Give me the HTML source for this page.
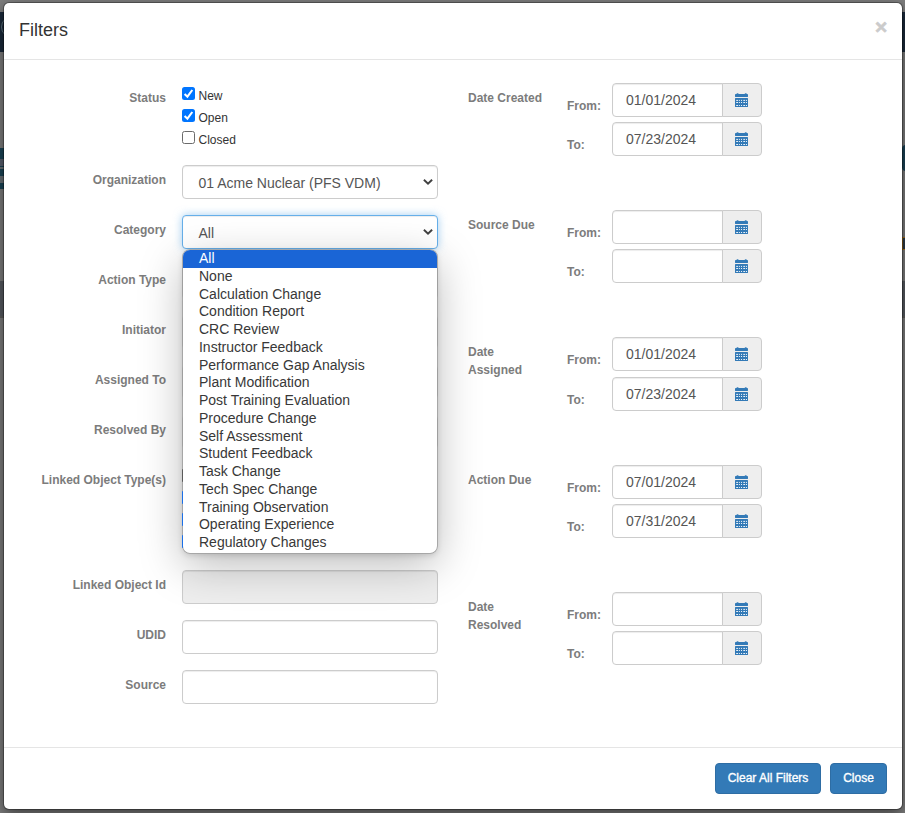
<!DOCTYPE html>
<html lang="en">
<head>
<meta charset="utf-8">
<title>Filters</title>
<style>
*{box-sizing:border-box;}
html,body{margin:0;padding:0;}
body{width:905px;height:813px;overflow:hidden;position:relative;background:#7f7f7f;
  font-family:"Liberation Sans",Arial,Helvetica,sans-serif;font-size:12px;line-height:1.42857143;color:#333;}
.abs{position:absolute;}
/* page behind backdrop */
.nav{left:0;top:12px;width:905px;height:40px;background:#1b2b3c;}
.teal{left:0;top:148px;width:20px;height:41px;background:#1b4658;}
.band{left:0;top:281px;width:905px;height:35px;background:#585c62;}
/* modal */
.modal{left:3px;top:2px;width:900px;height:808px;background:#fff;background-clip:padding-box;border:1px solid rgba(0,0,0,.3);border-radius:6px;
  box-shadow:0 5px 15px rgba(0,0,0,.5);}
.hline{left:4px;width:898px;height:1px;background:#e5e5e5;}
h4{margin:0;font-size:18px;font-weight:500;line-height:26px;color:#333;left:19px;top:17px;}
.close{left:875px;top:14px;font-size:21px;font-weight:bold;line-height:26px;color:#000;opacity:.2;-webkit-text-stroke:.7px #000;}
.lbl{font-weight:bold;color:#7c7c7c;text-align:right;width:166px;left:0;height:17px;line-height:17px;white-space:nowrap;}
.rl{font-weight:bold;color:#7c7c7c;left:468px;width:80px;line-height:17.5px;}
.ft{font-weight:bold;color:#7c7c7c;left:567px;line-height:17px;height:17px;}
.cb{width:13px;height:13px;border-radius:2.5px;left:182px;}
.cb.on{background:#0075ff;}
.cb.off{background:#fff;border:1px solid #6b6b6b;}
.cb svg{position:absolute;left:0;top:0;width:13px;height:13px;}
.cl{left:198.5px;line-height:17px;height:17px;color:#333;}
.fc{left:182px;width:256px;height:34px;border:1px solid #ccc;border-radius:4px;background:#fff;
  box-shadow:inset 0 1px 1px rgba(0,0,0,.075);font-size:14px;color:#555;line-height:34px;padding-left:15.5px;white-space:nowrap;}
.fc.focus{border-color:#66afe9;box-shadow:inset 0 1px 1px rgba(0,0,0,.075),0 0 8px rgba(102,175,233,.6);}
.fc.dis{background:#eee;}
.fc .arr{position:absolute;right:4px;top:12px;width:10px;height:8px;}
.di{left:612px;width:111px;height:34px;border:1px solid #ccc;border-radius:4px 0 0 4px;background:#fff;
  box-shadow:inset 0 1px 1px rgba(0,0,0,.075);font-size:14px;color:#555;line-height:32px;padding-left:13px;}
.da{left:722px;width:40px;height:34px;border:1px solid #ccc;border-radius:0 4px 4px 0;background:#eee;}
.da svg{position:absolute;left:12px;top:9px;width:13px;height:14px;}
.dd{left:183.2px;top:250px;width:253.8px;height:303.4px;background:#fff;border-radius:7px;
  box-shadow:0 0 0 .8px #9d9d9d,0 12px 44px rgba(0,0,0,.27),0 2px 6px rgba(0,0,0,.16);overflow:hidden;font-size:14px;color:#383838;}
.dd div{height:17.75px;line-height:17.75px;padding-left:15.8px;white-space:nowrap;}
.dd div.sel{background:#1a65d6;color:#fff;}
.btn{height:31px;border:1px solid #2e6da4;border-radius:4px;background:#337ab7;color:#fff;font-size:12px;line-height:29px;text-align:center;top:763px;
  -webkit-text-stroke:0.35px #fff;}
</style>
</head>
<body>
<div class="abs nav"></div>
<div class="abs teal"></div>
<div class="abs band"></div>
<div class="abs" style="left:0.5px;top:16px;width:22px;height:22px;border:1.5px solid #5f7581;border-radius:50%"></div>
<div class="abs" style="left:0;top:159px;width:4px;height:7px;background:#5b6270"></div>
<div class="abs" style="left:0;top:167px;width:4px;height:2px;background:#6d7478"></div>
<div class="abs" style="left:0;top:176px;width:4px;height:7px;background:#6b7378"></div>
<div class="abs" style="left:902px;top:145px;width:8px;height:26px;background:#1a4357;border-radius:4px 0 0 4px"></div>
<div class="abs" style="left:902px;top:237px;width:8px;height:13px;background:#2b3a47;border:1px solid #a8721f"></div>
<div class="abs" style="left:0;top:316px;width:905px;height:2px;background:#5e5e5e"></div>

<div class="abs modal"></div>
<div class="abs hline" style="top:59px"></div>
<div class="abs hline" style="top:747px"></div>
<h4 class="abs">Filters</h4>
<div class="abs close">×</div>

<!-- left column labels -->
<div class="abs lbl" style="top:90px">Status</div>
<div class="abs lbl" style="top:172px">Organization</div>
<div class="abs lbl" style="top:222px">Category</div>
<div class="abs lbl" style="top:272px">Action Type</div>
<div class="abs lbl" style="top:322px">Initiator</div>
<div class="abs lbl" style="top:372px">Assigned To</div>
<div class="abs lbl" style="top:422px">Resolved By</div>
<div class="abs lbl" style="top:472px">Linked Object Type(s)</div>
<div class="abs lbl" style="top:577px">Linked Object Id</div>
<div class="abs lbl" style="top:627px">UDID</div>
<div class="abs lbl" style="top:677px">Source</div>

<!-- status checkboxes -->
<div class="abs cb on" style="top:87px"><svg viewBox="0 0 13 13"><path d="M2.6 7.0 L5.4 9.7 L10.3 3.0" fill="none" stroke="#fff" stroke-width="2.1"/></svg></div>
<div class="abs cl" style="top:88px">New</div>
<div class="abs cb on" style="top:109px"><svg viewBox="0 0 13 13"><path d="M2.6 7.0 L5.4 9.7 L10.3 3.0" fill="none" stroke="#fff" stroke-width="2.1"/></svg></div>
<div class="abs cl" style="top:110px">Open</div>
<div class="abs cb off" style="top:131px"></div>
<div class="abs cl" style="top:132px">Closed</div>

<!-- controls hidden under list -->
<div class="abs fc" style="top:265px">All</div>
<div class="abs fc" style="top:315px">All</div>
<div class="abs fc" style="top:365px">All</div>
<div class="abs fc" style="top:415px">All</div>
<div class="abs cb off" style="top:469px;left:181.7px"></div>
<div class="abs cb on" style="top:491px;left:181.7px"></div>
<div class="abs cb on" style="top:513px;left:181.7px"></div>
<div class="abs cb on" style="top:535px;left:181.7px"></div>

<div class="abs fc" style="top:165px">01 Acme Nuclear (PFS VDM)<svg class="arr" viewBox="0 0 10 8"><path d="M0.9 1.7 L5 5.7 L9.1 1.7" fill="none" stroke="#404040" stroke-width="1.9"/></svg></div>
<div class="abs fc focus" style="top:215px">All<svg class="arr" viewBox="0 0 10 8"><path d="M0.9 1.7 L5 5.7 L9.1 1.7" fill="none" stroke="#404040" stroke-width="1.9"/></svg></div>

<div class="abs fc dis" style="top:570px"></div>
<div class="abs fc" style="top:620px"></div>
<div class="abs fc" style="top:670px"></div>

<!-- dropdown list -->
<div class="abs dd">
<div class="sel">All</div>
<div>None</div>
<div>Calculation Change</div>
<div>Condition Report</div>
<div>CRC Review</div>
<div>Instructor Feedback</div>
<div>Performance Gap Analysis</div>
<div>Plant Modification</div>
<div>Post Training Evaluation</div>
<div>Procedure Change</div>
<div>Self Assessment</div>
<div>Student Feedback</div>
<div>Task Change</div>
<div>Tech Spec Change</div>
<div>Training Observation</div>
<div>Operating Experience</div>
<div>Regulatory Changes</div>
</div>

<div class="abs" style="left:182.3px;top:469px;width:1px;height:13px;background:#5a5a5a;border-radius:2px 0 0 2px"></div>
<div class="abs" style="left:182.3px;top:491px;width:1px;height:13px;background:#1a6fe8;border-radius:2px 0 0 2px"></div>
<div class="abs" style="left:182.3px;top:513px;width:1px;height:13px;background:#1a6fe8;border-radius:2px 0 0 2px"></div>
<div class="abs" style="left:182.3px;top:535px;width:1px;height:13px;background:#1a6fe8;border-radius:2px 0 0 2px"></div>
<!-- right column -->
<div class="abs rl" style="top:90px">Date Created</div>
<div class="abs ft" style="top:98px">From:</div>
<div class="abs di" style="top:83px">01/01/2024</div>
<div class="abs da" style="top:83px"><svg viewBox="0 0 13 14"><g fill="#337ab7"><rect x="1.4" y="0.2" width="2.3" height="2.5" rx="1"/><rect x="9.6" y="0.2" width="2.3" height="2.5" rx="1"/><rect x="0" y="1.1" width="13" height="2.8" rx=".4"/><rect x="0" y="5" width="13" height="9" rx=".5"/></g><rect x="1.20" y="6.90" width="1.8" height="1" fill="#fff" fill-opacity=".9"/><rect x="3.90" y="6.90" width="1.0" height="1" fill="#fff" fill-opacity=".9"/><rect x="6.00" y="6.90" width="1.0" height="1" fill="#fff" fill-opacity=".9"/><rect x="8.30" y="6.90" width="1.8" height="1" fill="#fff" fill-opacity=".9"/><rect x="11.00" y="6.90" width="1.0" height="1" fill="#fff" fill-opacity=".9"/><rect x="1.20" y="9.00" width="1.8" height="1" fill="#fff" fill-opacity=".9"/><rect x="3.90" y="9.00" width="1.0" height="1" fill="#fff" fill-opacity=".9"/><rect x="6.00" y="9.00" width="1.0" height="1" fill="#fff" fill-opacity=".9"/><rect x="8.30" y="9.00" width="1.8" height="1" fill="#fff" fill-opacity=".9"/><rect x="11.00" y="9.00" width="1.0" height="1" fill="#fff" fill-opacity=".9"/><rect x="1.20" y="12.00" width="1.8" height="1" fill="#fff" fill-opacity=".9"/><rect x="3.90" y="12.00" width="1.0" height="1" fill="#fff" fill-opacity=".9"/><rect x="6.00" y="12.00" width="1.0" height="1" fill="#fff" fill-opacity=".9"/><rect x="8.30" y="12.00" width="1.8" height="1" fill="#fff" fill-opacity=".9"/><rect x="11.00" y="12.00" width="1.0" height="1" fill="#fff" fill-opacity=".9"/></svg></div>
<div class="abs ft" style="top:137px">To:</div>
<div class="abs di" style="top:122px">07/23/2024</div>
<div class="abs da" style="top:122px"><svg viewBox="0 0 13 14"><g fill="#337ab7"><rect x="1.4" y="0.2" width="2.3" height="2.5" rx="1"/><rect x="9.6" y="0.2" width="2.3" height="2.5" rx="1"/><rect x="0" y="1.1" width="13" height="2.8" rx=".4"/><rect x="0" y="5" width="13" height="9" rx=".5"/></g><rect x="1.20" y="6.90" width="1.8" height="1" fill="#fff" fill-opacity=".9"/><rect x="3.90" y="6.90" width="1.0" height="1" fill="#fff" fill-opacity=".9"/><rect x="6.00" y="6.90" width="1.0" height="1" fill="#fff" fill-opacity=".9"/><rect x="8.30" y="6.90" width="1.8" height="1" fill="#fff" fill-opacity=".9"/><rect x="11.00" y="6.90" width="1.0" height="1" fill="#fff" fill-opacity=".9"/><rect x="1.20" y="9.00" width="1.8" height="1" fill="#fff" fill-opacity=".9"/><rect x="3.90" y="9.00" width="1.0" height="1" fill="#fff" fill-opacity=".9"/><rect x="6.00" y="9.00" width="1.0" height="1" fill="#fff" fill-opacity=".9"/><rect x="8.30" y="9.00" width="1.8" height="1" fill="#fff" fill-opacity=".9"/><rect x="11.00" y="9.00" width="1.0" height="1" fill="#fff" fill-opacity=".9"/><rect x="1.20" y="12.00" width="1.8" height="1" fill="#fff" fill-opacity=".9"/><rect x="3.90" y="12.00" width="1.0" height="1" fill="#fff" fill-opacity=".9"/><rect x="6.00" y="12.00" width="1.0" height="1" fill="#fff" fill-opacity=".9"/><rect x="8.30" y="12.00" width="1.8" height="1" fill="#fff" fill-opacity=".9"/><rect x="11.00" y="12.00" width="1.0" height="1" fill="#fff" fill-opacity=".9"/></svg></div>
<div class="abs rl" style="top:217px">Source Due</div>
<div class="abs ft" style="top:225px">From:</div>
<div class="abs di" style="top:210px"></div>
<div class="abs da" style="top:210px"><svg viewBox="0 0 13 14"><g fill="#337ab7"><rect x="1.4" y="0.2" width="2.3" height="2.5" rx="1"/><rect x="9.6" y="0.2" width="2.3" height="2.5" rx="1"/><rect x="0" y="1.1" width="13" height="2.8" rx=".4"/><rect x="0" y="5" width="13" height="9" rx=".5"/></g><rect x="1.20" y="6.90" width="1.8" height="1" fill="#fff" fill-opacity=".9"/><rect x="3.90" y="6.90" width="1.0" height="1" fill="#fff" fill-opacity=".9"/><rect x="6.00" y="6.90" width="1.0" height="1" fill="#fff" fill-opacity=".9"/><rect x="8.30" y="6.90" width="1.8" height="1" fill="#fff" fill-opacity=".9"/><rect x="11.00" y="6.90" width="1.0" height="1" fill="#fff" fill-opacity=".9"/><rect x="1.20" y="9.00" width="1.8" height="1" fill="#fff" fill-opacity=".9"/><rect x="3.90" y="9.00" width="1.0" height="1" fill="#fff" fill-opacity=".9"/><rect x="6.00" y="9.00" width="1.0" height="1" fill="#fff" fill-opacity=".9"/><rect x="8.30" y="9.00" width="1.8" height="1" fill="#fff" fill-opacity=".9"/><rect x="11.00" y="9.00" width="1.0" height="1" fill="#fff" fill-opacity=".9"/><rect x="1.20" y="12.00" width="1.8" height="1" fill="#fff" fill-opacity=".9"/><rect x="3.90" y="12.00" width="1.0" height="1" fill="#fff" fill-opacity=".9"/><rect x="6.00" y="12.00" width="1.0" height="1" fill="#fff" fill-opacity=".9"/><rect x="8.30" y="12.00" width="1.8" height="1" fill="#fff" fill-opacity=".9"/><rect x="11.00" y="12.00" width="1.0" height="1" fill="#fff" fill-opacity=".9"/></svg></div>
<div class="abs ft" style="top:264px">To:</div>
<div class="abs di" style="top:249px"></div>
<div class="abs da" style="top:249px"><svg viewBox="0 0 13 14"><g fill="#337ab7"><rect x="1.4" y="0.2" width="2.3" height="2.5" rx="1"/><rect x="9.6" y="0.2" width="2.3" height="2.5" rx="1"/><rect x="0" y="1.1" width="13" height="2.8" rx=".4"/><rect x="0" y="5" width="13" height="9" rx=".5"/></g><rect x="1.20" y="6.90" width="1.8" height="1" fill="#fff" fill-opacity=".9"/><rect x="3.90" y="6.90" width="1.0" height="1" fill="#fff" fill-opacity=".9"/><rect x="6.00" y="6.90" width="1.0" height="1" fill="#fff" fill-opacity=".9"/><rect x="8.30" y="6.90" width="1.8" height="1" fill="#fff" fill-opacity=".9"/><rect x="11.00" y="6.90" width="1.0" height="1" fill="#fff" fill-opacity=".9"/><rect x="1.20" y="9.00" width="1.8" height="1" fill="#fff" fill-opacity=".9"/><rect x="3.90" y="9.00" width="1.0" height="1" fill="#fff" fill-opacity=".9"/><rect x="6.00" y="9.00" width="1.0" height="1" fill="#fff" fill-opacity=".9"/><rect x="8.30" y="9.00" width="1.8" height="1" fill="#fff" fill-opacity=".9"/><rect x="11.00" y="9.00" width="1.0" height="1" fill="#fff" fill-opacity=".9"/><rect x="1.20" y="12.00" width="1.8" height="1" fill="#fff" fill-opacity=".9"/><rect x="3.90" y="12.00" width="1.0" height="1" fill="#fff" fill-opacity=".9"/><rect x="6.00" y="12.00" width="1.0" height="1" fill="#fff" fill-opacity=".9"/><rect x="8.30" y="12.00" width="1.8" height="1" fill="#fff" fill-opacity=".9"/><rect x="11.00" y="12.00" width="1.0" height="1" fill="#fff" fill-opacity=".9"/></svg></div>
<div class="abs rl" style="top:344px">Date<br>Assigned</div>
<div class="abs ft" style="top:352px">From:</div>
<div class="abs di" style="top:337px">01/01/2024</div>
<div class="abs da" style="top:337px"><svg viewBox="0 0 13 14"><g fill="#337ab7"><rect x="1.4" y="0.2" width="2.3" height="2.5" rx="1"/><rect x="9.6" y="0.2" width="2.3" height="2.5" rx="1"/><rect x="0" y="1.1" width="13" height="2.8" rx=".4"/><rect x="0" y="5" width="13" height="9" rx=".5"/></g><rect x="1.20" y="6.90" width="1.8" height="1" fill="#fff" fill-opacity=".9"/><rect x="3.90" y="6.90" width="1.0" height="1" fill="#fff" fill-opacity=".9"/><rect x="6.00" y="6.90" width="1.0" height="1" fill="#fff" fill-opacity=".9"/><rect x="8.30" y="6.90" width="1.8" height="1" fill="#fff" fill-opacity=".9"/><rect x="11.00" y="6.90" width="1.0" height="1" fill="#fff" fill-opacity=".9"/><rect x="1.20" y="9.00" width="1.8" height="1" fill="#fff" fill-opacity=".9"/><rect x="3.90" y="9.00" width="1.0" height="1" fill="#fff" fill-opacity=".9"/><rect x="6.00" y="9.00" width="1.0" height="1" fill="#fff" fill-opacity=".9"/><rect x="8.30" y="9.00" width="1.8" height="1" fill="#fff" fill-opacity=".9"/><rect x="11.00" y="9.00" width="1.0" height="1" fill="#fff" fill-opacity=".9"/><rect x="1.20" y="12.00" width="1.8" height="1" fill="#fff" fill-opacity=".9"/><rect x="3.90" y="12.00" width="1.0" height="1" fill="#fff" fill-opacity=".9"/><rect x="6.00" y="12.00" width="1.0" height="1" fill="#fff" fill-opacity=".9"/><rect x="8.30" y="12.00" width="1.8" height="1" fill="#fff" fill-opacity=".9"/><rect x="11.00" y="12.00" width="1.0" height="1" fill="#fff" fill-opacity=".9"/></svg></div>
<div class="abs ft" style="top:392px">To:</div>
<div class="abs di" style="top:377px">07/23/2024</div>
<div class="abs da" style="top:377px"><svg viewBox="0 0 13 14"><g fill="#337ab7"><rect x="1.4" y="0.2" width="2.3" height="2.5" rx="1"/><rect x="9.6" y="0.2" width="2.3" height="2.5" rx="1"/><rect x="0" y="1.1" width="13" height="2.8" rx=".4"/><rect x="0" y="5" width="13" height="9" rx=".5"/></g><rect x="1.20" y="6.90" width="1.8" height="1" fill="#fff" fill-opacity=".9"/><rect x="3.90" y="6.90" width="1.0" height="1" fill="#fff" fill-opacity=".9"/><rect x="6.00" y="6.90" width="1.0" height="1" fill="#fff" fill-opacity=".9"/><rect x="8.30" y="6.90" width="1.8" height="1" fill="#fff" fill-opacity=".9"/><rect x="11.00" y="6.90" width="1.0" height="1" fill="#fff" fill-opacity=".9"/><rect x="1.20" y="9.00" width="1.8" height="1" fill="#fff" fill-opacity=".9"/><rect x="3.90" y="9.00" width="1.0" height="1" fill="#fff" fill-opacity=".9"/><rect x="6.00" y="9.00" width="1.0" height="1" fill="#fff" fill-opacity=".9"/><rect x="8.30" y="9.00" width="1.8" height="1" fill="#fff" fill-opacity=".9"/><rect x="11.00" y="9.00" width="1.0" height="1" fill="#fff" fill-opacity=".9"/><rect x="1.20" y="12.00" width="1.8" height="1" fill="#fff" fill-opacity=".9"/><rect x="3.90" y="12.00" width="1.0" height="1" fill="#fff" fill-opacity=".9"/><rect x="6.00" y="12.00" width="1.0" height="1" fill="#fff" fill-opacity=".9"/><rect x="8.30" y="12.00" width="1.8" height="1" fill="#fff" fill-opacity=".9"/><rect x="11.00" y="12.00" width="1.0" height="1" fill="#fff" fill-opacity=".9"/></svg></div>
<div class="abs rl" style="top:472px">Action Due</div>
<div class="abs ft" style="top:480px">From:</div>
<div class="abs di" style="top:465px">07/01/2024</div>
<div class="abs da" style="top:465px"><svg viewBox="0 0 13 14"><g fill="#337ab7"><rect x="1.4" y="0.2" width="2.3" height="2.5" rx="1"/><rect x="9.6" y="0.2" width="2.3" height="2.5" rx="1"/><rect x="0" y="1.1" width="13" height="2.8" rx=".4"/><rect x="0" y="5" width="13" height="9" rx=".5"/></g><rect x="1.20" y="6.90" width="1.8" height="1" fill="#fff" fill-opacity=".9"/><rect x="3.90" y="6.90" width="1.0" height="1" fill="#fff" fill-opacity=".9"/><rect x="6.00" y="6.90" width="1.0" height="1" fill="#fff" fill-opacity=".9"/><rect x="8.30" y="6.90" width="1.8" height="1" fill="#fff" fill-opacity=".9"/><rect x="11.00" y="6.90" width="1.0" height="1" fill="#fff" fill-opacity=".9"/><rect x="1.20" y="9.00" width="1.8" height="1" fill="#fff" fill-opacity=".9"/><rect x="3.90" y="9.00" width="1.0" height="1" fill="#fff" fill-opacity=".9"/><rect x="6.00" y="9.00" width="1.0" height="1" fill="#fff" fill-opacity=".9"/><rect x="8.30" y="9.00" width="1.8" height="1" fill="#fff" fill-opacity=".9"/><rect x="11.00" y="9.00" width="1.0" height="1" fill="#fff" fill-opacity=".9"/><rect x="1.20" y="12.00" width="1.8" height="1" fill="#fff" fill-opacity=".9"/><rect x="3.90" y="12.00" width="1.0" height="1" fill="#fff" fill-opacity=".9"/><rect x="6.00" y="12.00" width="1.0" height="1" fill="#fff" fill-opacity=".9"/><rect x="8.30" y="12.00" width="1.8" height="1" fill="#fff" fill-opacity=".9"/><rect x="11.00" y="12.00" width="1.0" height="1" fill="#fff" fill-opacity=".9"/></svg></div>
<div class="abs ft" style="top:519px">To:</div>
<div class="abs di" style="top:504px">07/31/2024</div>
<div class="abs da" style="top:504px"><svg viewBox="0 0 13 14"><g fill="#337ab7"><rect x="1.4" y="0.2" width="2.3" height="2.5" rx="1"/><rect x="9.6" y="0.2" width="2.3" height="2.5" rx="1"/><rect x="0" y="1.1" width="13" height="2.8" rx=".4"/><rect x="0" y="5" width="13" height="9" rx=".5"/></g><rect x="1.20" y="6.90" width="1.8" height="1" fill="#fff" fill-opacity=".9"/><rect x="3.90" y="6.90" width="1.0" height="1" fill="#fff" fill-opacity=".9"/><rect x="6.00" y="6.90" width="1.0" height="1" fill="#fff" fill-opacity=".9"/><rect x="8.30" y="6.90" width="1.8" height="1" fill="#fff" fill-opacity=".9"/><rect x="11.00" y="6.90" width="1.0" height="1" fill="#fff" fill-opacity=".9"/><rect x="1.20" y="9.00" width="1.8" height="1" fill="#fff" fill-opacity=".9"/><rect x="3.90" y="9.00" width="1.0" height="1" fill="#fff" fill-opacity=".9"/><rect x="6.00" y="9.00" width="1.0" height="1" fill="#fff" fill-opacity=".9"/><rect x="8.30" y="9.00" width="1.8" height="1" fill="#fff" fill-opacity=".9"/><rect x="11.00" y="9.00" width="1.0" height="1" fill="#fff" fill-opacity=".9"/><rect x="1.20" y="12.00" width="1.8" height="1" fill="#fff" fill-opacity=".9"/><rect x="3.90" y="12.00" width="1.0" height="1" fill="#fff" fill-opacity=".9"/><rect x="6.00" y="12.00" width="1.0" height="1" fill="#fff" fill-opacity=".9"/><rect x="8.30" y="12.00" width="1.8" height="1" fill="#fff" fill-opacity=".9"/><rect x="11.00" y="12.00" width="1.0" height="1" fill="#fff" fill-opacity=".9"/></svg></div>
<div class="abs rl" style="top:599px">Date<br>Resolved</div>
<div class="abs ft" style="top:607px">From:</div>
<div class="abs di" style="top:592px"></div>
<div class="abs da" style="top:592px"><svg viewBox="0 0 13 14"><g fill="#337ab7"><rect x="1.4" y="0.2" width="2.3" height="2.5" rx="1"/><rect x="9.6" y="0.2" width="2.3" height="2.5" rx="1"/><rect x="0" y="1.1" width="13" height="2.8" rx=".4"/><rect x="0" y="5" width="13" height="9" rx=".5"/></g><rect x="1.20" y="6.90" width="1.8" height="1" fill="#fff" fill-opacity=".9"/><rect x="3.90" y="6.90" width="1.0" height="1" fill="#fff" fill-opacity=".9"/><rect x="6.00" y="6.90" width="1.0" height="1" fill="#fff" fill-opacity=".9"/><rect x="8.30" y="6.90" width="1.8" height="1" fill="#fff" fill-opacity=".9"/><rect x="11.00" y="6.90" width="1.0" height="1" fill="#fff" fill-opacity=".9"/><rect x="1.20" y="9.00" width="1.8" height="1" fill="#fff" fill-opacity=".9"/><rect x="3.90" y="9.00" width="1.0" height="1" fill="#fff" fill-opacity=".9"/><rect x="6.00" y="9.00" width="1.0" height="1" fill="#fff" fill-opacity=".9"/><rect x="8.30" y="9.00" width="1.8" height="1" fill="#fff" fill-opacity=".9"/><rect x="11.00" y="9.00" width="1.0" height="1" fill="#fff" fill-opacity=".9"/><rect x="1.20" y="12.00" width="1.8" height="1" fill="#fff" fill-opacity=".9"/><rect x="3.90" y="12.00" width="1.0" height="1" fill="#fff" fill-opacity=".9"/><rect x="6.00" y="12.00" width="1.0" height="1" fill="#fff" fill-opacity=".9"/><rect x="8.30" y="12.00" width="1.8" height="1" fill="#fff" fill-opacity=".9"/><rect x="11.00" y="12.00" width="1.0" height="1" fill="#fff" fill-opacity=".9"/></svg></div>
<div class="abs ft" style="top:646px">To:</div>
<div class="abs di" style="top:631px"></div>
<div class="abs da" style="top:631px"><svg viewBox="0 0 13 14"><g fill="#337ab7"><rect x="1.4" y="0.2" width="2.3" height="2.5" rx="1"/><rect x="9.6" y="0.2" width="2.3" height="2.5" rx="1"/><rect x="0" y="1.1" width="13" height="2.8" rx=".4"/><rect x="0" y="5" width="13" height="9" rx=".5"/></g><rect x="1.20" y="6.90" width="1.8" height="1" fill="#fff" fill-opacity=".9"/><rect x="3.90" y="6.90" width="1.0" height="1" fill="#fff" fill-opacity=".9"/><rect x="6.00" y="6.90" width="1.0" height="1" fill="#fff" fill-opacity=".9"/><rect x="8.30" y="6.90" width="1.8" height="1" fill="#fff" fill-opacity=".9"/><rect x="11.00" y="6.90" width="1.0" height="1" fill="#fff" fill-opacity=".9"/><rect x="1.20" y="9.00" width="1.8" height="1" fill="#fff" fill-opacity=".9"/><rect x="3.90" y="9.00" width="1.0" height="1" fill="#fff" fill-opacity=".9"/><rect x="6.00" y="9.00" width="1.0" height="1" fill="#fff" fill-opacity=".9"/><rect x="8.30" y="9.00" width="1.8" height="1" fill="#fff" fill-opacity=".9"/><rect x="11.00" y="9.00" width="1.0" height="1" fill="#fff" fill-opacity=".9"/><rect x="1.20" y="12.00" width="1.8" height="1" fill="#fff" fill-opacity=".9"/><rect x="3.90" y="12.00" width="1.0" height="1" fill="#fff" fill-opacity=".9"/><rect x="6.00" y="12.00" width="1.0" height="1" fill="#fff" fill-opacity=".9"/><rect x="8.30" y="12.00" width="1.8" height="1" fill="#fff" fill-opacity=".9"/><rect x="11.00" y="12.00" width="1.0" height="1" fill="#fff" fill-opacity=".9"/></svg></div>

<div class="abs btn" style="left:715px;width:106px">Clear All Filters</div>
<div class="abs btn" style="left:830px;width:57px">Close</div>
</body>
</html>
